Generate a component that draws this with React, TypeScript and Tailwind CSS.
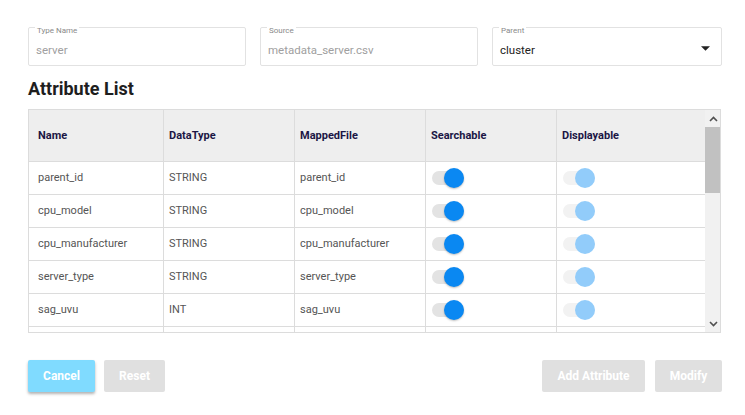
import React from "react";

const rows = [
  { name: "parent_id", type: "STRING", file: "parent_id" },
  { name: "cpu_model", type: "STRING", file: "cpu_model" },
  { name: "cpu_manufacturer", type: "STRING", file: "cpu_manufacturer" },
  { name: "server_type", type: "STRING", file: "server_type" },
  { name: "sag_uvu", type: "INT", file: "sag_uvu" },
  { name: "", type: "", file: "" },
];

function Field({ label, value, dark, arrow }: { label: string; value: string; dark?: boolean; arrow?: boolean }) {
  return (
    <div className="relative h-[39px] border border-[#e2e2e2] rounded-[2px] flex items-center pl-[7px] pr-[10px]">
      <span className="absolute left-[6px] top-[-1px] px-[2px] bg-white text-[8px] leading-[8px] text-[#8a8a8a]">{label}</span>
      <span className={`mt-[8px] text-[11.5px] ${dark ? "text-[#222]" : "text-[#a0a0a0]"}`}>{value}</span>
      {arrow && (
        <svg className="ml-auto mt-[4px] mr-[1px]" width="9" height="5" viewBox="0 0 10 5">
          <path d="M0 0 L10 0 L5 5 Z" fill="#222" />
        </svg>
      )}
    </div>
  );
}

function Toggle({ disabled }: { disabled?: boolean }) {
  return (
    <div className="relative w-[34px] h-[20px]">
      <div className={`absolute left-0 top-[3px] w-[32px] h-[14px] rounded-full ${disabled ? "bg-[#f2f2f2]" : "bg-[#e3e3e3]"}`} />
      <div
        className={`absolute left-[12px] top-0 w-[20px] h-[20px] rounded-full ${
          disabled ? "bg-[#92ccfa]" : "bg-[#0a88f2] shadow-[0_1px_2px_rgba(0,0,0,0.25)]"
        }`}
      />
    </div>
  );
}

export default function App() {
  const first = "border-r border-[#dcdcdc] pl-[9px] flex items-center";
  const cell = "border-r border-[#dcdcdc] pl-[5px] flex items-center";
  return (
    <div className="w-[745px] h-[415px] bg-white relative" style={{ fontFamily: "Roboto, 'Liberation Sans', sans-serif" }}>
      <div className="pl-[28px] pr-[24px] pt-[27px]">
        <div className="grid grid-cols-[218px_218px_230px] gap-x-[14px]">
          <Field label="Type Name" value="server" />
          <Field label="Source" value="metadata_server.csv" />
          <Field label="Parent" value="cluster" dark arrow />
        </div>
        <div className="mt-[12px] text-[18px] font-bold text-[#1e1e1e] leading-[22px]">Attribute List</div>
        <div className="mt-[9px] w-[693px] h-[224px] border border-[#dcdcdc] flex overflow-hidden">
          <div className="w-[676px] flex flex-col">
            <div className="h-[52px] shrink-0 bg-[#eeeeee] grid grid-cols-[135px_131px_131px_131px_148px] border-b border-[#dcdcdc] text-[11px] font-bold text-[#1b1645]">
              <div className={first}><span className="mt-[2px]">Name</span></div>
              <div className={cell}><span className="mt-[2px]">DataType</span></div>
              <div className={cell}><span className="mt-[2px]">MappedFile</span></div>
              <div className={cell}><span className="mt-[2px]">Searchable</span></div>
              <div className="pl-[5px] flex items-center"><span className="mt-[2px]">Displayable</span></div>
            </div>
            {rows.map((r, i) => (
              <div
                key={i}
                className="h-[33px] shrink-0 grid grid-cols-[135px_131px_131px_131px_148px] border-b border-[#dcdcdc] text-[11px] text-[#555]"
              >
                <div className={first}>{r.name}</div>
                <div className={cell}>{r.type}</div>
                <div className={cell}>{r.file}</div>
                <div className="border-r border-[#dcdcdc] pl-[6px] flex items-center">{r.name && <Toggle />}</div>
                <div className="pl-[6px] flex items-center">{r.name && <Toggle disabled />}</div>
              </div>
            ))}
          </div>
          <div className="w-[17px] bg-[#f1f1f1] flex flex-col items-center">
            <div className="h-[17px] w-full flex items-center justify-center">
              <svg width="9" height="6" viewBox="0 0 9 6">
                <path d="M1 5 L4.5 1.5 L8 5" fill="none" stroke="#505050" strokeWidth="1.6" />
              </svg>
            </div>
            <div className="w-[16px] h-[66px] bg-[#c1c1c1]" />
            <div className="flex-1" />
            <div className="h-[17px] w-full flex items-center justify-center">
              <svg width="9" height="6" viewBox="0 0 9 6">
                <path d="M1 1 L4.5 4.5 L8 1" fill="none" stroke="#505050" strokeWidth="1.6" />
              </svg>
            </div>
          </div>
        </div>
        <div className="mt-[27px] flex items-center w-[694px]">
          <button className="w-[67px] h-[32px] bg-[#80dbff] text-white text-[12px] font-bold rounded-[2px] shadow-[0_2px_3px_rgba(0,0,0,0.3)]">
            Cancel
          </button>
          <button className="ml-[9px] w-[61px] h-[32px] bg-[#e0e0e0] text-white text-[12px] font-bold rounded-[2px]">Reset</button>
          <div className="flex-1" />
          <button className="w-[103px] h-[32px] bg-[#e0e0e0] text-white text-[12px] font-bold rounded-[2px]">Add Attribute</button>
          <button className="ml-[10px] w-[67px] h-[32px] bg-[#e0e0e0] text-white text-[12px] font-bold rounded-[2px]">Modify</button>
        </div>
      </div>
    </div>
  );
}
